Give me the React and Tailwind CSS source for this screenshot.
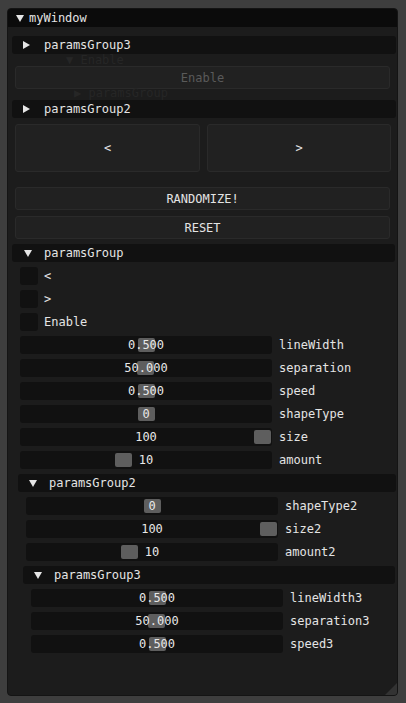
import React from "react";

const Tri = ({ down, className = "" }) =>
  down ? (
    <svg width="8" height="7" viewBox="0 0 8 7" className={className}>
      <path d="M0 0 H8 L4 7 Z" fill="#e6e6e6" />
    </svg>
  ) : (
    <svg width="7" height="8" viewBox="0 0 7 8" className={className}>
      <path d="M0 0 L7 4 L0 8 Z" fill="#e6e6e6" />
    </svg>
  );

const Header = ({ label, down, ml, w, triX, textX }) => (
  <div
    className={`h-[18px] ${ml} ${w} flex items-center rounded-[3px] bg-[#111111] text-[#e4e4e4]`}
  >
    <div className={`${triX} flex items-center`}>
      <Tri down={down} />
    </div>
    <span className={textX}>{label}</span>
  </div>
);

const Slider = ({ value, grab, label, ml }) => (
  <div className={`flex items-center h-[18px] ${ml}`}>
    <div className="relative w-[252px] h-[18px] rounded-[3px] bg-[#111111] flex items-center justify-center">
      <div
        className="absolute top-[2px] h-[14px] w-[17px] rounded-[2px] bg-[#5e5e5e]"
        style={{ left: grab }}
      />
      <span className="relative text-[#e8e8e8]">{value}</span>
    </div>
    <span className="ml-[7px] text-[#e4e4e4]">{label}</span>
  </div>
);

const Check = ({ label }) => (
  <div className="flex items-center h-[18px] ml-[12px]">
    <div className="w-[18px] h-[18px] rounded-[3px] bg-[#111111]" />
    <span className="ml-[6px] text-[#e4e4e4]">{label}</span>
  </div>
);

const Btn = ({ children, h = "h-[23px]", w = "w-[375px]", ml = "ml-[7px]", muted }) => (
  <div
    className={`${h} ${w} ${ml} rounded-[3px] bg-[#212121] border border-[#2a2a2a] flex items-center justify-center ${
      muted ? "text-[#5a5a5a]" : "text-[#e4e4e4]"
    }`}
  >
    {children}
  </div>
);

const App = () => {
  return (
    <div className="w-[406px] h-[703px] bg-[#3e3e3e] pt-[8px] pl-[7px] font-['DejaVu_Sans_Mono',monospace] text-[12px] leading-none">
      <div className="relative w-[391px] h-[688px] bg-[#1c1c1c] border border-[#141414] rounded-[4px] overflow-hidden flex flex-col">
        <div className="h-[18px] bg-[#0b0b0b] flex items-center text-[#e4e4e4]">
          <div className="ml-[8px] flex items-center">
            <Tri down />
          </div>
          <span className="ml-[5px]">myWindow</span>
        </div>

        <div className="mt-[9px]">
          <Header label="paramsGroup3" ml="ml-[4px]" w="w-[384px]" triX="ml-[11px]" textX="ml-[14px]" />
        </div>

        <div className="relative mt-[12px]">
          <span className="absolute left-[58px] -top-[12px] text-[#262626]">▼ Enable</span>
          <Btn muted>Enable</Btn>
          <span className="absolute left-[66px] top-[21px] text-[#262626]">▶ paramsGroup</span>
        </div>

        <div className="mt-[11px]">
          <Header label="paramsGroup2" ml="ml-[4px]" w="w-[384px]" triX="ml-[11px]" textX="ml-[14px]" />
        </div>

        <div className="mt-[6px] flex">
          <Btn h="h-[48px]" w="w-[185px]">&lt;</Btn>
          <Btn h="h-[48px]" w="w-[184px]" ml="ml-[7px]">&gt;</Btn>
        </div>

        <div className="mt-[15px]">
          <Btn>RANDOMIZE!</Btn>
        </div>
        <div className="mt-[6px]">
          <Btn>RESET</Btn>
        </div>

        <div className="mt-[5px]">
          <Header label="paramsGroup" down ml="ml-[4px]" w="w-[383px]" triX="ml-[12px]" textX="ml-[12px]" />
        </div>

        <div className="flex flex-col gap-[5px] mt-[5px]">
          <Check label="<" />
          <Check label=">" />
          <Check label="Enable" />
          <Slider value="0.500" grab={118} label="lineWidth" ml="ml-[12px]" />
          <Slider value="50.000" grab={117} label="separation" ml="ml-[12px]" />
          <Slider value="0.500" grab={118} label="speed" ml="ml-[12px]" />
          <Slider value="0" grab={118} label="shapeType" ml="ml-[12px]" />
          <Slider value="100" grab={234} label="size" ml="ml-[12px]" />
          <Slider value="10" grab={95} label="amount" ml="ml-[12px]" />
          <Header label="paramsGroup2" down ml="ml-[10px]" w="w-[378px]" triX="ml-[11px]" textX="ml-[12px]" />
          <Slider value="0" grab={118} label="shapeType2" ml="ml-[18px]" />
          <Slider value="100" grab={234} label="size2" ml="ml-[18px]" />
          <Slider value="10" grab={95} label="amount2" ml="ml-[18px]" />
          <Header label="paramsGroup3" down ml="ml-[15px]" w="w-[372px]" triX="ml-[11px]" textX="ml-[12px]" />
          <Slider value="0.500" grab={118} label="lineWidth3" ml="ml-[23px]" />
          <Slider value="50.000" grab={117} label="separation3" ml="ml-[23px]" />
          <Slider value="0.500" grab={118} label="speed3" ml="ml-[23px]" />
        </div>

        <svg width="12" height="12" viewBox="0 0 12 12" className="absolute right-0 bottom-0">
          <path d="M12 0 V12 H0 Z" fill="#333333" />
        </svg>
      </div>
    </div>
  );
};

export default App;
